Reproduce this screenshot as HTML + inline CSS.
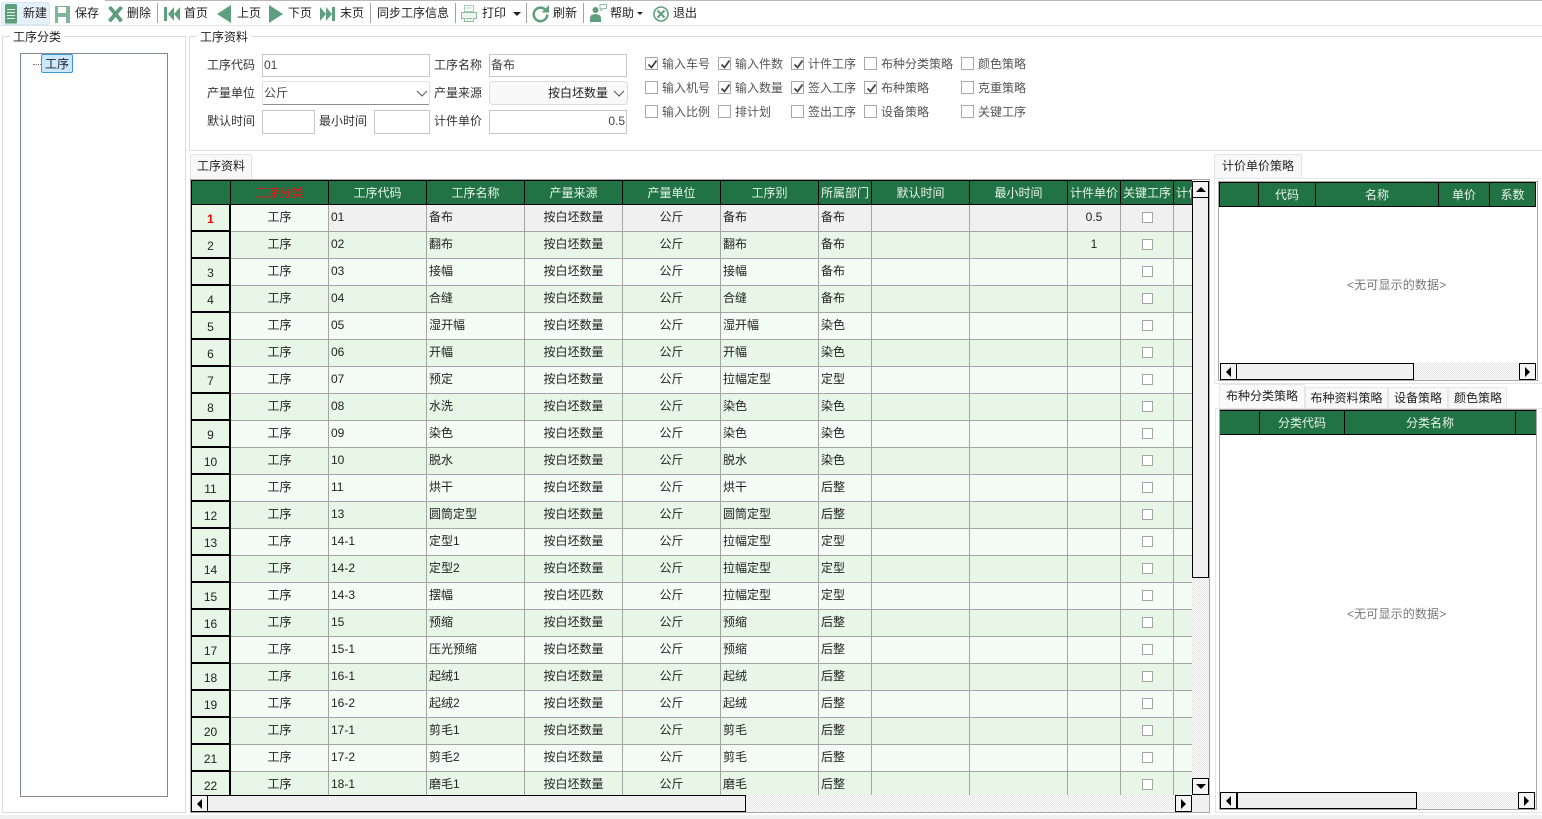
<!DOCTYPE html>
<html lang="zh"><head><meta charset="utf-8"><title>工序资料</title>
<style>
html,body{margin:0;padding:0;background:#fff}
body{width:1542px;height:819px;position:relative;overflow:hidden;font:12px/16px "Liberation Sans","Noto Sans CJK SC",sans-serif;color:#222}
.a{position:absolute;white-space:nowrap}
.t{position:absolute;white-space:nowrap;line-height:16px}
.sep{position:absolute;top:3px;width:1px;height:20px;background:#a0a0a0}
.box{position:absolute;border:1px solid #dcdcdc;box-sizing:border-box}
.leg{position:absolute;background:#fff;padding:0 3px;line-height:16px;color:#222}
.inp{position:absolute;border:1px solid #c6c6c6;box-sizing:border-box;background:#fff;color:#444;line-height:21px;padding:0 2px;white-space:nowrap}
.lb{position:absolute;color:#333;line-height:16px;white-space:nowrap}
.cb{position:absolute;width:13px;height:13px;border:1px solid #a8a8a8;box-sizing:border-box;background:#fff}
.cb svg{position:absolute;left:1px;top:1px}
.ct{position:absolute;color:#555;line-height:16px;white-space:nowrap}
.tab{position:absolute;box-sizing:border-box;border:1px solid #e6e6e6;border-bottom:0;background:#f8f8f8;border-radius:2px 2px 0 0;text-align:center;color:#222;white-space:nowrap}
#g{position:absolute;left:191px;top:180px;width:1001px;height:615px;overflow:hidden;background:#f0f0f0}
table{border-collapse:separate;border-spacing:0;table-layout:fixed;width:1043px}
th{height:25px;box-sizing:border-box;background:#217346;color:#e9f3ea;font-weight:normal;border-right:1px solid #000;border-bottom:1px solid #000;border-top:1px solid #000;padding:0;text-align:center;overflow:hidden;white-space:nowrap}
th:first-child{border-left:1px solid #000}
th:last-child{text-align:left;padding-left:2px}
td{height:27px;box-sizing:border-box;padding:0 0 3px 2px;border-right:1px solid #a5a5a5;border-bottom:1px solid #a5a5a5;overflow:hidden;white-space:nowrap;background:#f5fcf5}
tr:nth-child(even) td{background:#e8f6e8}
td:nth-child(1){background:#e8f6e8!important;text-align:center;padding:2px 0 0;border-right:2px solid #000;border-bottom:2px solid #000;border-left:1px solid #000}
td:nth-child(2),td:nth-child(5),td:nth-child(6),td:nth-child(11),td:nth-child(12){text-align:center;padding-left:0}
tr.s td{background:#f0f0f0}
tr.s td:nth-child(2){background:#f5fcf5}
tr.s td:first-child{color:#f00;font-weight:bold}
td i{display:block;position:relative;top:1px;width:9px;height:9px;border:1px solid #a5a5a5;background:#fff;margin:0 auto;box-sizing:content-box}
.dith{background:repeating-conic-gradient(#e4e4e4 0 25%,#fff 0 50%) 0 0/2px 2px}
.sb{position:absolute;box-sizing:border-box;border:1px solid #000;background:#f0f0f0}
.btn{background:#f4f4f4}
.btn svg{position:absolute;left:0;top:0}
.gh{position:absolute;box-sizing:border-box;background:#217346;color:#e9f3ea;border:1px solid #000;border-left:0;text-align:center;white-space:nowrap;overflow:hidden}
.nd{position:absolute;color:#777;white-space:nowrap;line-height:16px;letter-spacing:.15px}
</style></head><body>

<!-- toolbar -->
<div class="a" style="left:105px;top:0;width:1437px;height:1px;background:#b8b8b8"></div>
<div class="a" style="left:0;top:25px;width:1542px;height:1px;background:#e4e4e4"></div>
<div class="a" style="left:1px;top:2px;width:49px;height:23px;background:#e6f2fb;border:1px solid #d3e6f6;border-radius:3px;box-sizing:border-box"></div>
<svg class="a" style="left:0;top:0" width="720" height="26" viewBox="0 0 720 26">
<g fill="#5f9f7d">
<path d="M5 5.500q0-1.500 1.500-1.500h9q1.500 0 1.500 1.500v17q0 1-1 1h-10q-1 0-1-1z"/>
<path d="M7 9h8v1H7zM7 12h8v1H7zM7 15h8v1H7zM7 18h8v1H7z" fill="#dff0e6"/>
<path d="M55 6h15v17H55zM58 7v6h8V7zM58 17v6h8v-6z" fill-rule="evenodd" fill="#7fb59a"/>
<path d="M108 8l3-2 4.500 5 4.500-5 3 2-5 6 5 6-3 2.500-4.500-5.500-4.500 5.500-3-2.500 5-6z"/>
<path d="M164 7h3v14h-3zM168 14l6-7v14zM174 14l6-7v14z"/>
<path d="M217 14l14-9v18z"/>
<path d="M269 5l14 9-14 9z"/>
<path d="M320 7l6 7-6 7zM326 7l6 7-6 7zM332 7h3v14h-3z"/>
<path d="M464.500 5.500h9v6h-9zM466.500 8h5" fill="none" stroke="#a9ccb9"/>
<path d="M461.500 12.500h15v6h-3v3h-9v-3h-3zM466 18.500h6" fill="#eef6f1" stroke="#8dbba4"/>
<path d="M545 9.300A6.800 6.800 0 1 0 547.300 14.500" fill="none" stroke="#5f9f7d" stroke-width="2.500"/>
<path d="M549 5v7.500h-7.500z"/>
<path d="M590 22v-4q0-3 3-3.500l2.500-.5 2.500.5q3 .5 3 3.500v4z"/>
<circle cx="595.500" cy="10" r="3"/>
<path d="M600 4.500h6.500v4h-3.500l-2 2v-2h-1z" fill="#fff" stroke="#8dbba4"/>
<circle cx="661" cy="14" r="7" fill="none" stroke="#5f9f7d" stroke-width="1.600"/>
<path d="M657.500 10.500l7 7M664.500 10.500l-7 7" stroke="#5f9f7d" stroke-width="2.200" fill="none"/>
</g>
<path d="M513 12h8l-4 4z" fill="#222"/>
<path d="M637 12h6l-3 3z" fill="#222"/>
</svg>
<span class="t" style="left:23px;top:5px">新建</span>
<span class="t" style="left:75px;top:5px">保存</span>
<span class="t" style="left:127px;top:5px">删除</span>
<div class="sep" style="left:157px"></div>
<span class="t" style="left:184px;top:5px">首页</span>
<span class="t" style="left:237px;top:5px">上页</span>
<span class="t" style="left:288px;top:5px">下页</span>
<span class="t" style="left:340px;top:5px">末页</span>
<div class="sep" style="left:370px"></div>
<span class="t" style="left:377px;top:5px">同步工序信息</span>
<div class="sep" style="left:455px"></div>
<span class="t" style="left:482px;top:5px">打印</span>
<div class="sep" style="left:526px"></div>
<span class="t" style="left:553px;top:5px">刷新</span>
<div class="sep" style="left:583px"></div>
<span class="t" style="left:610px;top:5px">帮助</span>
<span class="t" style="left:673px;top:5px">退出</span>

<!-- left group -->
<div class="box" style="left:2px;top:36px;width:184px;height:777px"></div>
<span class="leg" style="left:10px;top:29px">工序分类</span>
<div class="a" style="left:20px;top:53px;width:148px;height:744px;border:1px solid #828790;box-sizing:border-box"></div>
<div class="a" style="left:33px;top:64px;width:8px;border-top:1px dotted #777"></div>
<div class="a" style="left:41px;top:54px;width:32px;height:19px;background:#cce8ff;border:1px solid #3c97d8;border-radius:2px;box-sizing:border-box;text-align:center;line-height:18px">工序</div>

<!-- form group -->
<div class="box" style="left:189px;top:36px;width:1353px;height:115px;border-right:0"></div>
<span class="leg" style="left:197px;top:29px">工序资料</span>
<span class="lb" style="left:207px;top:57px">工序代码</span>
<div class="inp" style="left:262px;top:54px;width:168px;height:23px;padding-left:1px">01</div>
<span class="lb" style="left:434px;top:57px">工序名称</span>
<div class="inp" style="left:489px;top:54px;width:138px;height:23px;padding-left:1px">备布</div>
<span class="lb" style="left:207px;top:85px">产量单位</span>
<div class="inp" style="left:262px;top:81px;width:168px;height:24px;border-color:#e2e2e2 #e2e2e2 #8c8c8c;border-radius:2px;line-height:22px;padding-left:1px">公斤</div>
<svg class="a" style="left:416px;top:90px" width="12" height="8"><path d="M1 1l5 5 5-5" fill="none" stroke="#555"/></svg>
<span class="lb" style="left:434px;top:85px">产量来源</span>
<div class="inp" style="left:489px;top:81px;width:139px;height:24px;background:#f9f9f9;border-color:#dcdcdc;border-radius:4px;text-align:right;padding-right:19px;color:#222;line-height:23px">按白坯数量</div>
<svg class="a" style="left:613px;top:90px" width="12" height="8"><path d="M1 1l5 5 5-5" fill="none" stroke="#555"/></svg>
<span class="lb" style="left:207px;top:113px">默认时间</span>
<div class="inp" style="left:262px;top:110px;width:53px;height:24px"></div>
<span class="lb" style="left:319px;top:113px">最小时间</span>
<div class="inp" style="left:374px;top:110px;width:56px;height:24px"></div>
<span class="lb" style="left:434px;top:113px">计件单价</span>
<div class="inp" style="left:489px;top:110px;width:138px;height:24px;text-align:right;padding-right:1px">0.5</div>

<!-- checkboxes -->
<div class="cb" style="left:645px;top:57px"><svg width="11" height="11"><path d="M1.500 5.500l3 3 5-7" fill="none" stroke="#444" stroke-width="1.800"/></svg></div><span class="ct" style="left:662px;top:56px">输入车号</span>
<div class="cb" style="left:718px;top:57px"><svg width="11" height="11"><path d="M1.500 5.500l3 3 5-7" fill="none" stroke="#444" stroke-width="1.800"/></svg></div><span class="ct" style="left:735px;top:56px">输入件数</span>
<div class="cb" style="left:791px;top:57px"><svg width="11" height="11"><path d="M1.500 5.500l3 3 5-7" fill="none" stroke="#444" stroke-width="1.800"/></svg></div><span class="ct" style="left:808px;top:56px">计件工序</span>
<div class="cb" style="left:864px;top:57px"></div><span class="ct" style="left:881px;top:56px">布种分类策略</span>
<div class="cb" style="left:961px;top:57px"></div><span class="ct" style="left:978px;top:56px">颜色策略</span>
<div class="cb" style="left:645px;top:81px"></div><span class="ct" style="left:662px;top:80px">输入机号</span>
<div class="cb" style="left:718px;top:81px"><svg width="11" height="11"><path d="M1.500 5.500l3 3 5-7" fill="none" stroke="#444" stroke-width="1.800"/></svg></div><span class="ct" style="left:735px;top:80px">输入数量</span>
<div class="cb" style="left:791px;top:81px"><svg width="11" height="11"><path d="M1.500 5.500l3 3 5-7" fill="none" stroke="#444" stroke-width="1.800"/></svg></div><span class="ct" style="left:808px;top:80px">签入工序</span>
<div class="cb" style="left:864px;top:81px"><svg width="11" height="11"><path d="M1.500 5.500l3 3 5-7" fill="none" stroke="#444" stroke-width="1.800"/></svg></div><span class="ct" style="left:881px;top:80px">布种策略</span>
<div class="cb" style="left:961px;top:81px"></div><span class="ct" style="left:978px;top:80px">克重策略</span>
<div class="cb" style="left:645px;top:105px"></div><span class="ct" style="left:662px;top:104px">输入比例</span>
<div class="cb" style="left:718px;top:105px"></div><span class="ct" style="left:735px;top:104px">排计划</span>
<div class="cb" style="left:791px;top:105px"></div><span class="ct" style="left:808px;top:104px">签出工序</span>
<div class="cb" style="left:864px;top:105px"></div><span class="ct" style="left:881px;top:104px">设备策略</span>
<div class="cb" style="left:961px;top:105px"></div><span class="ct" style="left:978px;top:104px">关键工序</span>

<!-- main grid -->
<div class="tab" style="left:190px;top:154px;width:62px;height:25px;line-height:23px">工序资料</div>
<div class="a" style="left:190px;top:179px;width:1020px;height:634px;border:1px solid #a8a8a8;box-sizing:border-box"></div>
<div id="g"><table>
<colgroup><col style="width:40px"><col style="width:98px"><col style="width:98px"><col style="width:98px"><col style="width:98px"><col style="width:98px"><col style="width:98px"><col style="width:53px"><col style="width:98px"><col style="width:98px"><col style="width:53px"><col style="width:53px"><col style="width:60px"></colgroup>
<thead><tr><th></th><th style="color:#f01010">工序分类</th><th>工序代码</th><th>工序名称</th><th>产量来源</th><th>产量单位</th><th>工序别</th><th>所属部门</th><th>默认时间</th><th>最小时间</th><th>计件单价</th><th>关键工序</th><th>计件工序</th></tr></thead>
<tbody>
<tr class="s"><td>1<td>工序<td>01<td>备布<td>按白坯数量<td>公斤<td>备布<td>备布<td><td><td style="text-align:center;padding-left:0">0.5<td><i></i><td></tr>
<tr><td>2<td>工序<td>02<td>翻布<td>按白坯数量<td>公斤<td>翻布<td>备布<td><td><td style="text-align:center;padding-left:0">1<td><i></i><td></tr>
<tr><td>3<td>工序<td>03<td>接幅<td>按白坯数量<td>公斤<td>接幅<td>备布<td><td><td><td><i></i><td></tr>
<tr><td>4<td>工序<td>04<td>合缝<td>按白坯数量<td>公斤<td>合缝<td>备布<td><td><td><td><i></i><td></tr>
<tr><td>5<td>工序<td>05<td>湿开幅<td>按白坯数量<td>公斤<td>湿开幅<td>染色<td><td><td><td><i></i><td></tr>
<tr><td>6<td>工序<td>06<td>开幅<td>按白坯数量<td>公斤<td>开幅<td>染色<td><td><td><td><i></i><td></tr>
<tr><td>7<td>工序<td>07<td>预定<td>按白坯数量<td>公斤<td>拉幅定型<td>定型<td><td><td><td><i></i><td></tr>
<tr><td>8<td>工序<td>08<td>水洗<td>按白坯数量<td>公斤<td>染色<td>染色<td><td><td><td><i></i><td></tr>
<tr><td>9<td>工序<td>09<td>染色<td>按白坯数量<td>公斤<td>染色<td>染色<td><td><td><td><i></i><td></tr>
<tr><td>10<td>工序<td>10<td>脱水<td>按白坯数量<td>公斤<td>脱水<td>染色<td><td><td><td><i></i><td></tr>
<tr><td>11<td>工序<td>11<td>烘干<td>按白坯数量<td>公斤<td>烘干<td>后整<td><td><td><td><i></i><td></tr>
<tr><td>12<td>工序<td>13<td>圆筒定型<td>按白坯数量<td>公斤<td>圆筒定型<td>后整<td><td><td><td><i></i><td></tr>
<tr><td>13<td>工序<td>14-1<td>定型1<td>按白坯数量<td>公斤<td>拉幅定型<td>定型<td><td><td><td><i></i><td></tr>
<tr><td>14<td>工序<td>14-2<td>定型2<td>按白坯数量<td>公斤<td>拉幅定型<td>定型<td><td><td><td><i></i><td></tr>
<tr><td>15<td>工序<td>14-3<td>摆幅<td>按白坯匹数<td>公斤<td>拉幅定型<td>定型<td><td><td><td><i></i><td></tr>
<tr><td>16<td>工序<td>15<td>预缩<td>按白坯数量<td>公斤<td>预缩<td>后整<td><td><td><td><i></i><td></tr>
<tr><td>17<td>工序<td>15-1<td>压光预缩<td>按白坯数量<td>公斤<td>预缩<td>后整<td><td><td><td><i></i><td></tr>
<tr><td>18<td>工序<td>16-1<td>起绒1<td>按白坯数量<td>公斤<td>起绒<td>后整<td><td><td><td><i></i><td></tr>
<tr><td>19<td>工序<td>16-2<td>起绒2<td>按白坯数量<td>公斤<td>起绒<td>后整<td><td><td><td><i></i><td></tr>
<tr><td>20<td>工序<td>17-1<td>剪毛1<td>按白坯数量<td>公斤<td>剪毛<td>后整<td><td><td><td><i></i><td></tr>
<tr><td>21<td>工序<td>17-2<td>剪毛2<td>按白坯数量<td>公斤<td>剪毛<td>后整<td><td><td><td><i></i><td></tr>
<tr><td>22<td>工序<td>18-1<td>磨毛1<td>按白坯数量<td>公斤<td>磨毛<td>后整<td><td><td><td><i></i><td></tr>
</tbody></table></div>
<!-- main v scroll -->
<div class="a dith" style="left:1192px;top:181px;width:17px;height:615px"></div>
<div class="sb btn" style="left:1192px;top:181px;width:17px;height:17px"><svg width="15" height="15"><path d="M3 10l5-5 5 5z" fill="#000"/></svg></div>
<div class="sb" style="left:1192px;top:197px;width:17px;height:381px"></div>
<div class="sb btn" style="left:1192px;top:778px;width:17px;height:17px"><svg width="15" height="15"><path d="M3 5h10l-5 5z" fill="#000"/></svg></div>
<!-- main h scroll -->
<div class="a dith" style="left:191px;top:795px;width:1001px;height:17px"></div>
<div class="sb btn" style="left:191px;top:795px;width:17px;height:17px"><svg width="15" height="15"><path d="M10 3v10l-5-5z" fill="#000"/></svg></div>
<div class="sb" style="left:207px;top:795px;width:539px;height:17px"></div>
<div class="sb btn" style="left:1175px;top:795px;width:17px;height:17px"><svg width="15" height="15"><path d="M5 3v10l5-5z" fill="#000"/></svg></div>
<div class="a" style="left:1192px;top:796px;width:17px;height:16px;background:#f0f0f0"></div>
<div class="a" style="left:0;top:815px;width:1542px;height:4px;background:#f0f0f0"></div>

<!-- right top panel -->
<div class="tab" style="left:1214px;top:154px;width:88px;height:25px;line-height:23px">计价单价策略</div>
<div class="a" style="left:1214px;top:178px;width:328px;height:206px;border:1px solid #e6e6e6;border-right:0;box-sizing:border-box"></div>
<div class="a" style="left:1218px;top:181px;width:320px;height:200px;border:1px solid #a8a8a8;box-sizing:border-box;background:#fff"></div>
<div class="gh" style="left:1219px;top:182px;width:40px;height:25px;line-height:24px;border-left:1px solid #000"></div>
<div class="gh" style="left:1259px;top:182px;width:57px;height:25px;line-height:24px">代码</div>
<div class="gh" style="left:1316px;top:182px;width:123px;height:25px;line-height:24px">名称</div>
<div class="gh" style="left:1439px;top:182px;width:51px;height:25px;line-height:24px">单价</div>
<div class="gh" style="left:1490px;top:182px;width:46px;height:25px;line-height:24px">系数</div>
<span class="nd" style="left:1347px;top:277px">&lt;无可显示的数据&gt;</span>
<div class="a dith" style="left:1220px;top:363px;width:316px;height:17px"></div>
<div class="sb btn" style="left:1220px;top:363px;width:17px;height:17px"><svg width="15" height="15"><path d="M10 3v10l-5-5z" fill="#000"/></svg></div>
<div class="sb" style="left:1236px;top:363px;width:178px;height:17px"></div>
<div class="sb btn" style="left:1519px;top:363px;width:17px;height:17px"><svg width="15" height="15"><path d="M5 3v10l5-5z" fill="#000"/></svg></div>

<!-- right bottom panel -->
<div class="tab" style="left:1219px;top:384px;width:86px;height:25px;line-height:23px;background:#fafafa">布种分类策略</div>
<div class="tab" style="left:1305px;top:387px;width:83px;height:22px;line-height:21px">布种资料策略</div>
<div class="tab" style="left:1388px;top:387px;width:60px;height:22px;line-height:21px">设备策略</div>
<div class="tab" style="left:1448px;top:387px;width:59px;height:22px;line-height:21px;padding-left:1px">颜色策略</div>
<div class="a" style="left:1215px;top:408px;width:327px;height:405px;border:1px solid #e6e6e6;border-right:0;box-sizing:border-box"></div>
<div class="a" style="left:1219px;top:409px;width:318px;height:401px;border:1px solid #a8a8a8;box-sizing:border-box;background:#fff"></div>
<div class="gh" style="left:1220px;top:410px;width:40px;height:25px;line-height:24px;border-left:0"></div>
<div class="gh" style="left:1260px;top:410px;width:85px;height:25px;line-height:24px">分类代码</div>
<div class="gh" style="left:1345px;top:410px;width:171px;height:25px;line-height:24px">分类名称</div>
<div class="gh" style="left:1516px;top:410px;width:20px;height:25px;border-right:0"></div>
<span class="nd" style="left:1347px;top:606px">&lt;无可显示的数据&gt;</span>
<div class="a dith" style="left:1220px;top:792px;width:316px;height:17px"></div>
<div class="sb btn" style="left:1220px;top:792px;width:17px;height:17px"><svg width="15" height="15"><path d="M10 3v10l-5-5z" fill="#000"/></svg></div>
<div class="sb" style="left:1237px;top:792px;width:180px;height:17px"></div>
<div class="sb btn" style="left:1518px;top:792px;width:17px;height:17px"><svg width="15" height="15"><path d="M5 3v10l5-5z" fill="#000"/></svg></div>
</body></html>
